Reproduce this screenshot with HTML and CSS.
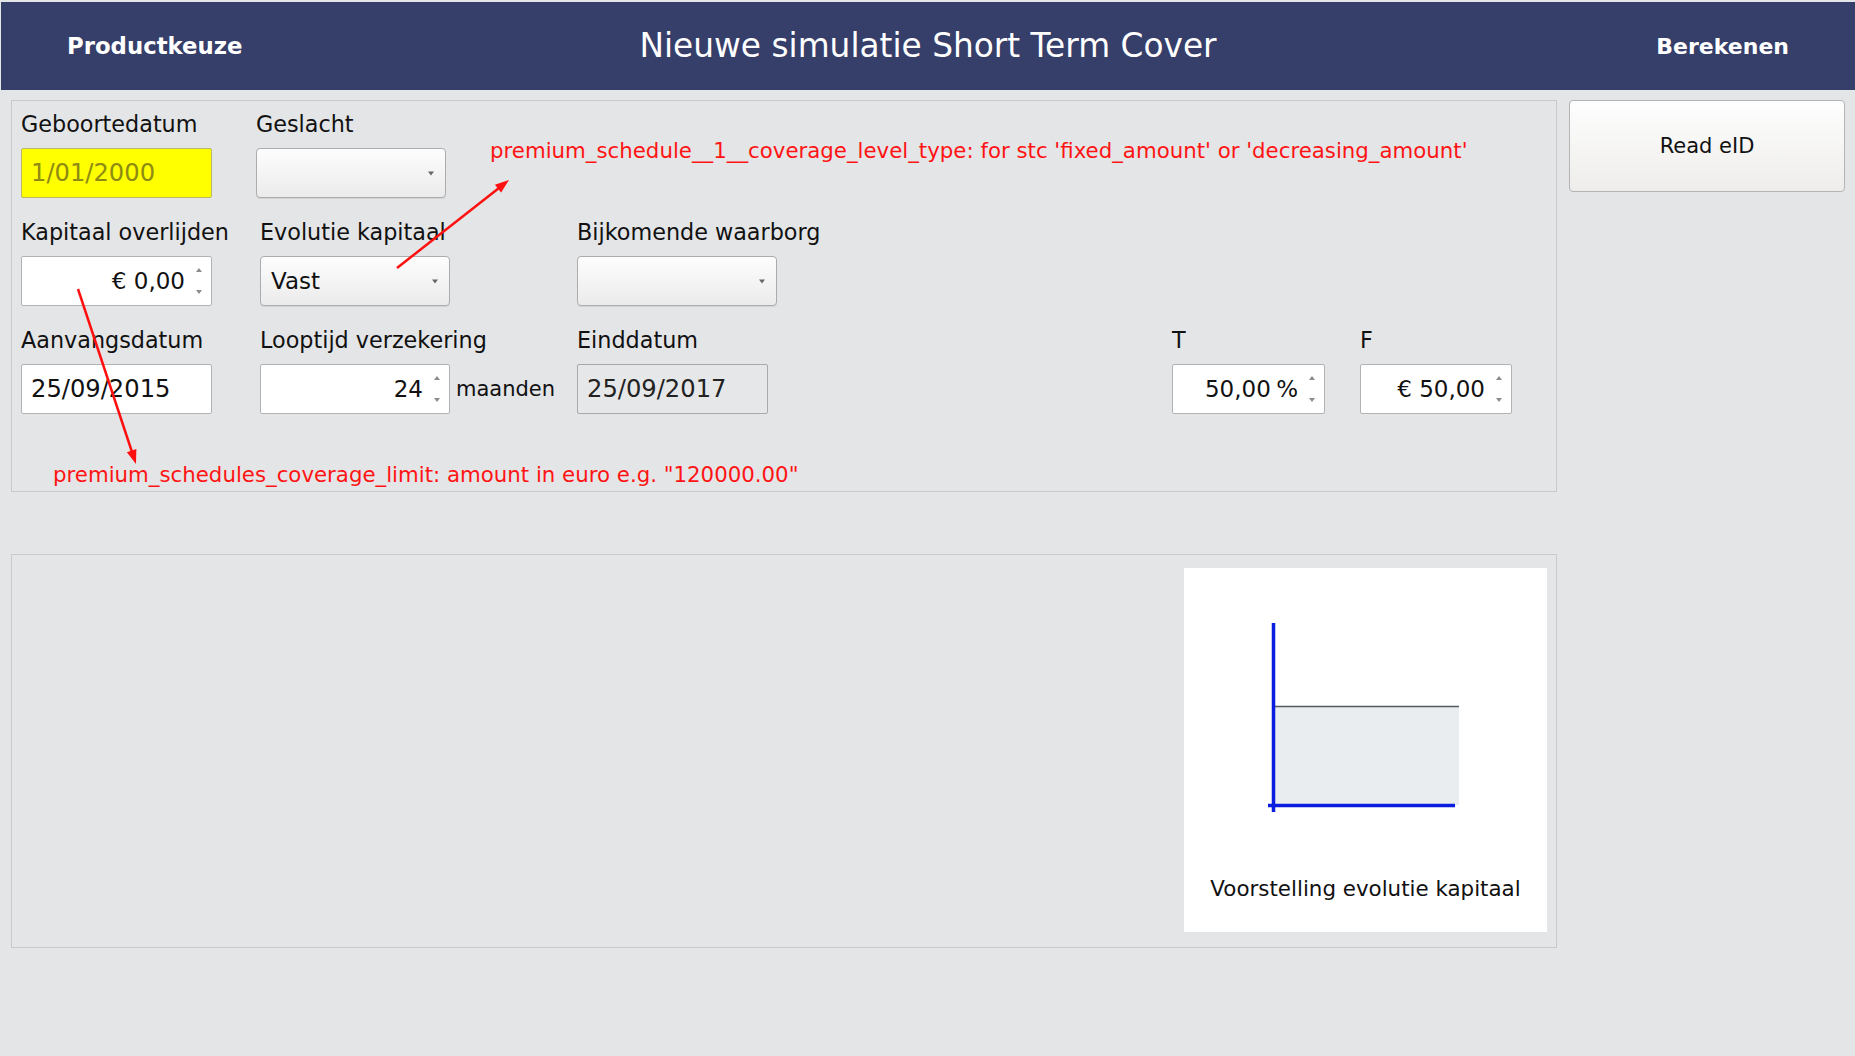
FILE: index.html
```html
<!DOCTYPE html>
<html lang="nl">
<head>
<meta charset="utf-8">
<title>Nieuwe simulatie Short Term Cover</title>
<link rel="stylesheet" href="styles.css">
</head>
<body>
<div class="app">
  <header class="topbar">
    <div class="nav-left">Productkeuze</div>
    <div class="title">Nieuwe simulatie Short Term Cover</div>
    <div class="nav-right">Berekenen</div>
  </header>

  <main class="content">
    <div class="left-col">
      <section class="panel form-panel">
        <div class="row">
          <div class="group">
            <div class="label">Geboortedatum</div>
            <div class="input date input-required w191">1/01/2000</div>
          </div>
          <div class="group shift-left">
            <div class="label">Geslacht</div>
            <div class="combo w190">
              <span class="combo-value"></span>
              <svg class="caret" width="8" height="5" viewBox="0 0 8 5"><polygon points="1,0.5 7,0.5 4,4.5" fill="#666"/></svg>
            </div>
          </div>
        </div>

        <div class="row">
          <div class="group">
            <div class="label">Kapitaal overlijden</div>
            <div class="input spin w191">
              <span class="value">€ 0,00</span>
              <svg class="spinner" width="10" height="34" viewBox="0 0 10 34"><polygon points="2,8 8,8 5,4" fill="#8c8c8c"/><polygon points="2,26 8,26 5,30" fill="#8c8c8c"/></svg>
            </div>
          </div>
          <div class="group">
            <div class="label">Evolutie kapitaal</div>
            <div class="combo w190">
              <span class="combo-value">Vast</span>
              <svg class="caret" width="8" height="5" viewBox="0 0 8 5"><polygon points="1,0.5 7,0.5 4,4.5" fill="#666"/></svg>
            </div>
          </div>
          <div class="group">
            <div class="label">Bijkomende waarborg</div>
            <div class="combo w200">
              <span class="combo-value"></span>
              <svg class="caret" width="8" height="5" viewBox="0 0 8 5"><polygon points="1,0.5 7,0.5 4,4.5" fill="#666"/></svg>
            </div>
          </div>
        </div>

        <div class="row">
          <div class="group">
            <div class="label">Aanvangsdatum</div>
            <div class="input date w191">25/09/2015</div>
          </div>
          <div class="group">
            <div class="label">Looptijd verzekering</div>
            <div class="inline">
              <div class="input spin w190">
                <span class="value">24</span>
                <svg class="spinner" width="10" height="34" viewBox="0 0 10 34"><polygon points="2,8 8,8 5,4" fill="#8c8c8c"/><polygon points="2,26 8,26 5,30" fill="#8c8c8c"/></svg>
              </div>
              <span class="unit">maanden</span>
            </div>
          </div>
          <div class="group">
            <div class="label">Einddatum</div>
            <div class="input date input-disabled w191">25/09/2017</div>
          </div>
          <div class="group">
            <div class="label">T</div>
            <div class="input spin w153">
              <span class="value tight">50,00 %</span>
              <svg class="spinner" width="10" height="34" viewBox="0 0 10 34"><polygon points="2,8 8,8 5,4" fill="#8c8c8c"/><polygon points="2,26 8,26 5,30" fill="#8c8c8c"/></svg>
            </div>
          </div>
          <div class="group">
            <div class="label">F</div>
            <div class="input spin w152">
              <span class="value">€ 50,00</span>
              <svg class="spinner" width="10" height="34" viewBox="0 0 10 34"><polygon points="2,8 8,8 5,4" fill="#8c8c8c"/><polygon points="2,26 8,26 5,30" fill="#8c8c8c"/></svg>
            </div>
          </div>
        </div>

        <div class="note note-inline">premium_schedules_coverage_limit: amount in euro e.g. "120000.00"</div>
      </section>

      <section class="panel chart-panel">
        <div class="chart-card">
          <svg class="chart" width="363" height="300" viewBox="0 0 363 300">
            <rect x="89" y="138" width="186" height="99" fill="#e9edf0"/>
            <line x1="89" y1="138.5" x2="275" y2="138.5" stroke="#555a5f" stroke-width="1.5"/>
            <line x1="89.5" y1="55" x2="89.5" y2="244" stroke="#0a1ee0" stroke-width="3.5"/>
            <line x1="84" y1="237.5" x2="271" y2="237.5" stroke="#0a1ee0" stroke-width="3.5"/>
          </svg>
          <div class="chart-caption">Voorstelling evolutie kapitaal</div>
        </div>
      </section>
    </div>

    <div class="side-col">
      <button class="btn-eid" type="button">Read eID</button>
    </div>
  </main>

  <div class="note note-float">premium_schedule__1__coverage_level_type: for stc 'fixed_amount' or 'decreasing_amount'</div>

  <svg class="arrows" width="1855" height="1056" viewBox="0 0 1855 1056">
    <line x1="397" y1="268" x2="499" y2="188" stroke="#ff1010" stroke-width="2.5"/>
    <polygon points="509,180 501.1,192.6 494.9,184.7" fill="#ff1010"/>
    <line x1="78" y1="289" x2="132" y2="452" stroke="#ff1010" stroke-width="2.5"/>
    <polygon points="136,464 136.35,449.1 126.85,452.3" fill="#ff1010"/>
  </svg>
</div>
</body>
</html>
```

FILE: styles.css
```css
* { box-sizing: border-box; }

html, body {
  margin: 0;
  padding: 0;
}

body {
  background: #e4e5e7;
  font-family: "DejaVu Sans", "Liberation Sans", sans-serif;
  color: #111;
}

.app {
  position: relative;
  width: 1855px;
  height: 1056px;
  overflow: hidden;
  background: #e4e5e7;
}

/* ---------- header ---------- */
.topbar {
  margin: 2px 0 0 1px;
  height: 88px;
  background: #363e6a;
  color: #fff;
  display: grid;
  grid-template-columns: 1fr auto 1fr;
  align-items: center;
}

.nav-left {
  padding-left: 66px;
  font-size: 22.8px;
  font-weight: bold;
}

.nav-right {
  justify-self: end;
  padding-right: 66px;
  font-size: 22px;
  font-weight: bold;
}

.title {
  font-size: 32.8px;
}

/* ---------- content ---------- */
.content {
  display: flex;
  gap: 12px;
  padding: 10px 10px 0 11px;
}

.left-col {
  width: 1546px;
  display: flex;
  flex-direction: column;
  gap: 62px;
}

.panel {
  border: 1px solid #c9cacd;
}

.form-panel {
  height: 392px;
  padding: 10px 0 0 9px;
}

.row {
  display: grid;
  grid-template-columns: 239px 317px 595px 188px 1fr;
  margin-bottom: 21px;
}

.group {
  display: flex;
  flex-direction: column;
  align-items: flex-start;
}

.shift-left { margin-left: -4px; }

.label {
  font-size: 22.3px;
  line-height: 26px;
  height: 26px;
  margin-bottom: 11px;
  white-space: nowrap;
}

.input {
  height: 50px;
  background: #fff;
  border: 1px solid #b3b3b3;
  border-radius: 2px;
  font-size: 23px;
  line-height: 48px;
  padding: 0 9px;
  white-space: nowrap;
}

.input.date {
  font-size: 24.2px;
}

.input-required {
  background: #ffff00;
  border-color: #b9b86a;
  color: #8e8b12;
}

.input-disabled {
  background: #e6e7e8;
  border-color: #a9a9a9;
  color: #222;
}

.spin {
  display: flex;
  align-items: center;
  padding: 0 7px 0 10px;
}

.spin .value {
  flex: 1;
  text-align: right;
}

.spin .value.tight {
  word-spacing: -2px;
}

.spinner {
  margin-left: 9px;
  flex: none;
}

.w191 { width: 191px; }
.w190 { width: 190px; }
.w200 { width: 200px; }
.w153 { width: 153px; }
.w152 { width: 152px; }

.combo {
  height: 50px;
  display: flex;
  align-items: center;
  padding: 0 10px 0 10px;
  border: 1px solid #acacac;
  border-radius: 4px;
  background: linear-gradient(#fdfdfd, #ebebeb);
  box-shadow: 0 1px 0 rgba(0,0,0,0.08);
  font-size: 23px;
}

.combo-value {
  flex: 1;
}

.caret { flex: none; }

.inline {
  display: flex;
  align-items: center;
}

.unit {
  margin-left: 6px;
  font-size: 21px;
  white-space: nowrap;
}

.note {
  color: #ff1414;
  font-size: 21.3px;
  line-height: 26px;
  white-space: nowrap;
}

.note-inline {
  margin: 48px 0 0 32px;
}

.note-float {
  position: absolute;
  left: 490px;
  top: 138px;
}

/* ---------- chart panel ---------- */
.chart-panel {
  height: 394px;
  padding: 13px 9px;
  display: flex;
  justify-content: flex-end;
}

.chart-card {
  width: 363px;
  height: 364px;
  background: #fff;
}

.chart { display: block; }

.chart-caption {
  margin-top: 8px;
  font-size: 21.4px;
  line-height: 26px;
  text-align: center;
  color: #111;
}

/* ---------- side ---------- */
.side-col {
  width: 276px;
}

.btn-eid {
  width: 276px;
  height: 92px;
  border: 1px solid #b4b4b4;
  border-radius: 4px;
  background: linear-gradient(#fefefe, #eeedeb);
  font-family: "DejaVu Sans", "Liberation Sans", sans-serif;
  font-size: 21px;
  color: #111;
  padding: 0;
}

.arrows {
  position: absolute;
  left: 0;
  top: 0;
  pointer-events: none;
}
```
